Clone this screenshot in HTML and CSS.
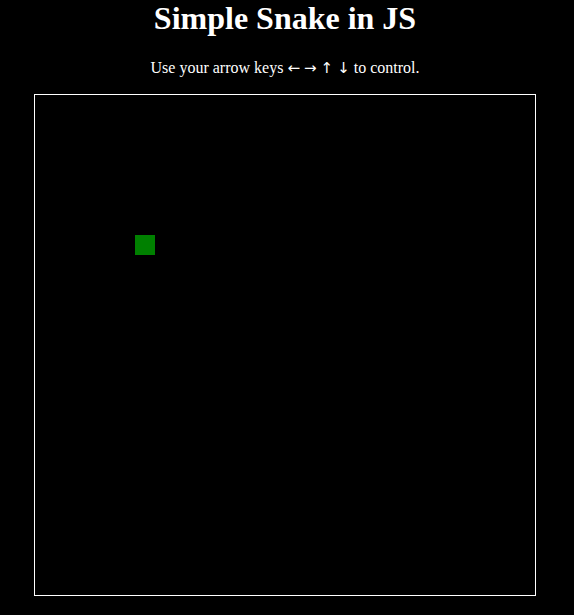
FILE: index.html
```html
<!DOCTYPE html>
<html>
<head>
<meta charset="utf-8">
<title>Simple Snake in JS</title>
<link rel="stylesheet" href="styles.css">
</head>
<body>
<div class="page">
  <h1 class="title">Simple Snake in JS</h1>
  <p class="hint">Use your arrow keys <span class="arrow">←</span> <span class="arrow">→</span> <span class="arrow">↑</span> <span class="arrow">↓</span> to control.</p>
  <div class="board">
    <div class="cell" style="left:100px;top:140px"></div>
  </div>
</div>
</body>
</html>
```
FILE: styles.css
```css
html, body {
  margin: 0;
  padding: 0;
  background: #000;
  color: #fff;
  font-family: "Liberation Serif", "Times New Roman", serif;
}
.page {
  width: 570px;
  display: flex;
  flex-direction: column;
  align-items: center;
}
.title {
  margin: 0;
  font-size: 32px;
  font-weight: bold;
  line-height: 37px;
}
.hint {
  margin: 22px 0 0 0;
  font-size: 16px;
  line-height: 18px;
}
.arrow {
  font-family: "DejaVu Sans", sans-serif;
  font-size: 15px;
  line-height: 18px;
}
.board {
  position: relative;
  margin-top: 17px;
  width: 500px;
  height: 500px;
  border: 1px solid #fff;
  background: #000;
}
.cell {
  position: absolute;
  width: 20px;
  height: 20px;
  background: #008000;
}
```
